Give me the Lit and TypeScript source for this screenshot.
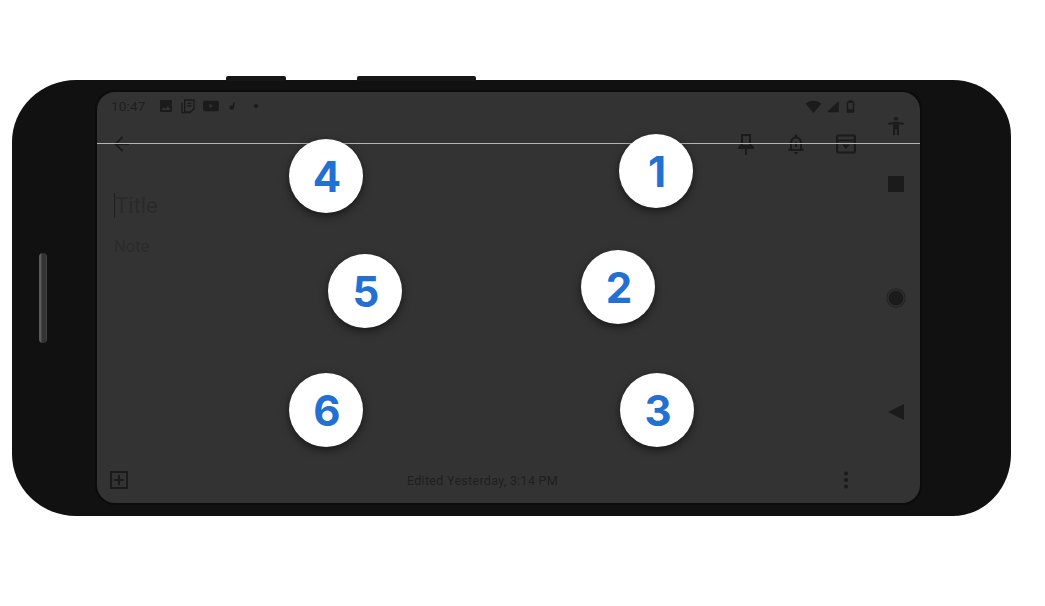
import { LitElement, html, css, svg } from "lit";
import { customElement } from "lit/decorators.js";

const RADIUS = 37;
const dots = [
  { n: 1, x: 559, y: 79 },
  { n: 2, x: 521, y: 195 },
  { n: 3, x: 560, y: 318 },
  { n: 4, x: 229, y: 84 },
  { n: 5, x: 268, y: 199 },
  { n: 6, x: 229, y: 318 },
];

const icon = (size: number, body: unknown, cls = "") =>
  html`<svg class="ic ${cls}" width=${size} height=${size} viewBox="0 0 24 24">${body}</svg>`;

@customElement("app-root")
export class AppRoot extends LitElement {
  static styles = css`
    :host {
      display: block;
      width: 1045px;
      height: 606px;
      background: #fff;
      box-sizing: border-box;
      padding: 80px 0 0 12px;
      font-family: Roboto, "Liberation Sans", sans-serif;
    }
    .phone {
      position: relative;
      width: 999px;
      height: 436px;
      background: #111;
      border-radius: 64px 58px 58px 64px / 62px 56px 62px 62px;
      display: flex;
      align-items: flex-start;
    }
    .key {
      position: absolute;
      top: -4px;
      height: 5px;
      background: #161616;
      border-radius: 2px 2px 0 0;
    }
    .key.a { left: 214px; width: 60px; }
    .key.b { left: 345px; width: 119px; }
    .speaker-col {
      width: 85px;
      height: 100%;
      flex: none;
      display: flex;
      align-items: center;
      padding-left: 27px;
      box-sizing: border-box;
    }
    .speaker {
      width: 8px;
      height: 90px;
      border-radius: 4px;
      background: linear-gradient(90deg, #5a5a5a 0 20%, #333 40% 80%, #4a4a4a 100%);
    }
    .screen {
      position: relative;
      margin-top: 12px;
      width: 823px;
      height: 411px;
      background: #333;
      border-radius: 18px;
      box-shadow: 0 0 0 2px #0c0c0c;
      display: flex;
      overflow: hidden;
    }
    .main {
      flex: 1;
      display: flex;
      flex-direction: column;
      min-width: 0;
    }
    .nav {
      width: 48px;
      flex: none;
      display: flex;
      flex-direction: column;
      align-items: center;
      padding-top: 24px;
      box-sizing: border-box;
    }
    .nav .sq { margin-top: 40px; }
    .nav .ci { margin-top: 96px; }
    .nav .tr { margin-top: 96px; }
    .ic { display: block; fill: #1b1b1b; flex: none; }
    .status {
      height: 28px;
      display: flex;
      align-items: center;
      padding: 0 14px;
      gap: 6px;
      color: #1f1f1f;
      font-size: 13.5px;
    }
    .time { margin-right: 6px; letter-spacing: 0.2px; }
    .dot { width: 4px; height: 4px; border-radius: 50%; background: #1b1b1b; margin-left: 10px; }
    .spacer { flex: 1; }
    .right { display: flex; align-items: center; gap: 3px; }
    .toolbar {
      height: 48px;
      display: flex;
      align-items: center;
      padding: 0 14px 0 13px;
    }
    .tools { display: flex; gap: 26px; }
    .fields { padding: 24px 0 0 17px; }
    .title {
      display: flex;
      align-items: center;
      height: 26px;
      font-size: 22px;
      color: #2a2a2a;
    }
    .caret { width: 1px; height: 25px; background: #1f1f1f; }
    .note { margin-top: 19px; height: 20px; line-height: 20px; font-size: 16.5px; color: #2b2b2b; }
    .footer {
      margin-top: auto;
      display: flex;
      align-items: center;
      justify-content: space-between;
      height: 24px;
      padding: 0 14px 11px 10px;
      font-size: 12.5px;
      letter-spacing: 0.3px;
      color: #1f1f1f;
    }
    .line {
      position: absolute;
      left: 0;
      right: 0;
      top: 51px;
      height: 1px;
      background: #b4b4b4;
    }
    .dotbtn {
      position: absolute;
      width: 74px;
      height: 74px;
      box-sizing: border-box;
      padding-left: 2px;
      border-radius: 50%;
      background: #fff;
      box-shadow: 0 3px 9px rgba(0, 0, 0, 0.55);
      display: flex;
      align-items: center;
      justify-content: center;
      font-family: Inter, Roboto, sans-serif;
      font-weight: 700;
      font-size: 42px;
      color: #2270d2;
    }
  `;

  render() {
    return html`
      <div class="phone">
        <div class="key a"></div>
        <div class="key b"></div>
        <div class="speaker-col"><div class="speaker"></div></div>
        <div class="screen">
          <div class="main">
            <div class="status">
              <span class="time">10:47</span>
              ${icon(16, svg`<path d="M21 19V5c0-1.100-.9-2-2-2H5c-1.100 0-2 .9-2 2v14c0 1.100.9 2 2 2h14c1.100 0 2-.9 2-2zM8.500 13.500l2.500 3.010L14.500 12l4.500 6H5l3.500-4.500z"/>`)}
              ${icon(16, svg`<path fill="none" stroke="#1b1b1b" stroke-width="2" d="M7 3h14v13l-5 5H7zM3 7v15h13M11 8h6M11 12h6"/>`)}
              ${icon(18, svg`<path d="M4 5h16c1.500 0 2.500 1 2.500 2.500v9c0 1.500-1 2.500-2.500 2.500H4c-1.500 0-2.500-1-2.500-2.500v-9C1.500 6 2.500 5 4 5zm6 4v6l5-3z" fill-rule="evenodd"/>`)}
              ${icon(12, svg`<path d="M15 4h3l-2 11a4.500 4.500 0 1 1-3-4.200z"/>`)}
              <span class="dot"></span>
              <span class="spacer"></span>
              <span class="right">
                ${icon(17, svg`<path d="M12 21 23 8C20 5.500 16.500 4 12 4S4 5.500 1 8z"/>`)}
                ${icon(15, svg`<path d="M22 3v18H3z"/>`)}
                ${icon(15, svg`<path d="M9 2h6v2h2a1 1 0 0 1 1 1v16a1 1 0 0 1-1 1H7a1 1 0 0 1-1-1V5a1 1 0 0 1 1-1h2zM8.500 6.500v10h7v-10z" fill-rule="evenodd"/>`)}
              </span>
            </div>
            <div class="toolbar">
              ${icon(24, svg`<path d="M19 12H5.500M12.500 5l-7 7 7 7" fill="none" stroke="#1b1b1b" stroke-width="1.800"/>`)}
              <span class="spacer"></span>
              <div class="tools">
                ${icon(24, svg`<path d="M7 2h10v10l3 3v2h-7v6h-2v-6H4v-2l3-3zm2 2v9h6V4z" fill-rule="evenodd"/>`)}
                ${icon(24, svg`<path d="M12 22c1.100 0 2-.9 2-2h-4c0 1.100.9 2 2 2zm6-6v-5c0-3.070-1.630-5.640-4.500-6.320V4c0-.83-.67-1.500-1.500-1.500s-1.500.67-1.500 1.500v.68C7.640 5.360 6 7.920 6 11v5l-2 2v1h16v-1l-2-2zm-2 1H8v-6c0-2.480 1.510-4.500 4-4.500s4 2.020 4 4.500v6z"/><rect x="11" y="10" width="2" height="5"/>`)}
                ${icon(24, svg`<path d="M4 2.500h16A2 2 0 0 1 22 4.500v15a2 2 0 0 1-2 2H4a2 2 0 0 1-2-2v-15a2 2 0 0 1 2-2zm.2 2v3h15.600v-3zm0 5v10h15.600v-10z" fill-rule="evenodd"/><path d="M8 12.500h8L12 17z"/>`)}
              </div>
            </div>
            <div class="fields">
              <div class="title"><span class="caret"></span>Title</div>
              <div class="note">Note</div>
            </div>
            <div class="footer">
              ${icon(24, svg`<path d="M3 3h18v18H3zm2 2v14h14V5zm6 2h2v4h4v2h-4v4h-2v-4H7v-2h4z" fill-rule="evenodd"/>`)}
              <span>Edited Yesterday, 3:14 PM</span>
              ${icon(24, svg`<circle cx="12" cy="5.500" r="2"/><circle cx="12" cy="12" r="2"/><circle cx="12" cy="18.500" r="2"/>`)}
            </div>
          </div>
          <div class="nav">
            ${icon(20, svg`<path d="M12 1c1.300 0 2.300 1 2.300 2.300s-1 2.300-2.300 2.300-2.300-1-2.300-2.300S10.700 1 12 1zm9.500 7.500-.5 2-5.500-1V23h-2.500v-7h-2v7H8.500V9.500l-5.500 1-.5-2L12 7z"/>`)}
            ${icon(16, svg`<rect width="24" height="24"/>`, "sq")}
            ${icon(20, svg`<circle cx="12" cy="12" r="9"/><circle cx="12" cy="12" r="11" fill="none" stroke="#1b1b1b" stroke-width="1.500" opacity=".6"/>`, "ci")}
            ${icon(16, svg`<path d="M24 0v24L0 12z"/>`, "tr")}
          </div>
          <div class="line"></div>
          ${dots.map(
            (d) => html`<div class="dotbtn" style="left:${d.x - RADIUS}px;top:${d.y - RADIUS}px">${d.n}</div>`
          )}
        </div>
      </div>
    `;
  }
}
